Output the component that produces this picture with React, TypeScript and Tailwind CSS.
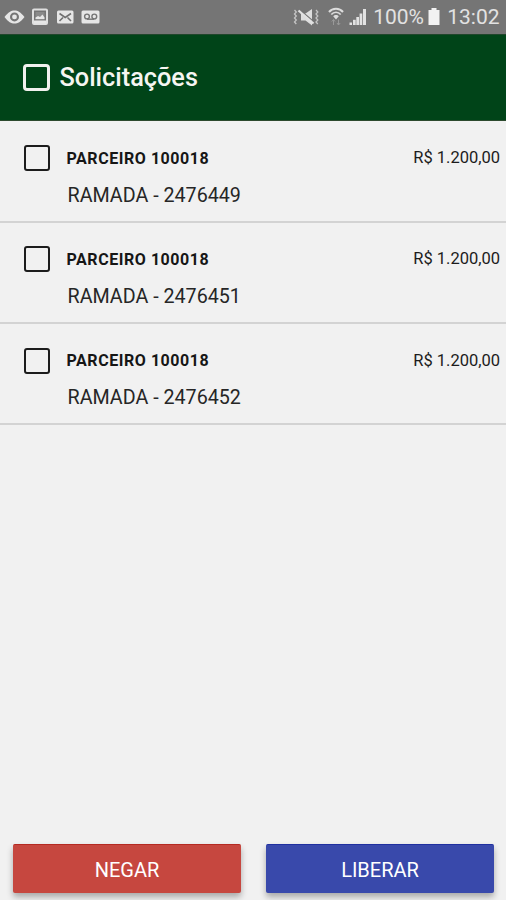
import clsx from "clsx";

const requests = [
  { id: "2476449", partner: "PARCEIRO 100018", name: "RAMADA", amount: "R$ 1.200,00" },
  { id: "2476451", partner: "PARCEIRO 100018", name: "RAMADA", amount: "R$ 1.200,00" },
  { id: "2476452", partner: "PARCEIRO 100018", name: "RAMADA", amount: "R$ 1.200,00" },
];

function NotificationIcons() {
  return (
    <svg width="102" height="34" viewBox="0 0 102 34" fill="#e6e6e6">
      {/* eye */}
      <path
        fillRule="evenodd"
        d="M4.500 17C8.500 12 11 10.500 14.500 10.500S20.500 12 24.500 17C20.500 22 18 23.500 14.500 23.500S8.500 22 4.500 17ZM14.500 12.400A4.500 4.500 0 1 0 14.500 21.400A4.500 4.500 0 1 0 14.500 12.400Z"
      />
      <circle cx="14.500" cy="16.900" r="2.400" />
      {/* picture */}
      <rect x="33" y="9.500" width="14" height="14.500" rx="1" fill="none" stroke="#e0e0e0" strokeWidth="2" />
      <rect x="35.500" y="12" width="9" height="8.500" fill="#8a8a8a" />
      <rect x="34" y="20.500" width="12" height="3" />
      <path d="M35.500 19V17.500L38 16L40 17L42.500 14.500L44.500 17.500V19Z" />
      {/* mail */}
      <rect x="57" y="10.500" width="16.500" height="13" rx="1.500" />
      <path
        d="M59.500 13.500L65.200 17.500L71 13.500M59.500 21L63 17.500M71 21L67.500 17.500"
        fill="none"
        stroke="#707070"
        strokeWidth="1.600"
      />
      {/* voicemail */}
      <rect x="81.500" y="10.500" width="18" height="13" rx="1.500" />
      <g fill="none" stroke="#757575" strokeWidth="1.400">
        <circle cx="87" cy="16.500" r="2.400" />
        <circle cx="94.300" cy="16.500" r="2.400" />
        <path d="M87 19.200H94.300" />
      </g>
    </svg>
  );
}

function MuteIcon() {
  return (
    <svg width="27" height="34" viewBox="0 0 27 34" fill="#dedede">
      <path d="M8 13.500H12.500L19 9V25.500L12.500 20.500H8Z" />
      <path d="M7 10L20.500 21.500" stroke="#757575" strokeWidth="1.500" />
      <path d="M5.500 10.500L20.500 23.500" stroke="#e2e2e2" strokeWidth="2.200" />
      <path
        d="M1.500 10L3.300 12L1.500 14L3.300 16L1.500 18L3.300 20L1.500 22L3.300 24M23 10L24.800 12L23 14L24.800 16L23 18L24.800 20L23 22L24.800 24"
        fill="none"
        stroke="#c4c4c4"
        strokeWidth="1.300"
      />
    </svg>
  );
}

function WifiIcon() {
  return (
    <svg width="16" height="34" viewBox="0 0 16 34" fill="none" stroke="#dcdcdc">
      <path d="M1 12C4.500 7.700 11.500 7.700 15 12" strokeWidth="2" />
      <path d="M3.300 14.500C5.800 11.500 10.200 11.500 12.700 14.500" strokeWidth="1.700" />
      <path d="M5.200 16.200C6.500 14.700 9.500 14.700 10.800 16.200L8 19.500Z" fill="#dcdcdc" stroke="none" />
      <path
        d="M5.500 19.500V25M3.800 21.500L5.500 19.500L7 21.500M10.500 19.500V25M9 23L10.500 25L12.200 23"
        stroke="#999999"
      />
    </svg>
  );
}

function SignalIcon() {
  return (
    <svg width="18" height="34" viewBox="0 0 18 34" fill="#e2e2e2">
      <rect x="0.500" y="22.500" width="2.500" height="2.500" />
      <rect x="4" y="19.800" width="2.700" height="5.200" />
      <rect x="7.300" y="17" width="2.700" height="8" />
      <rect x="10.600" y="13.500" width="2.700" height="11.500" />
      <rect x="14" y="9" width="3" height="16" />
    </svg>
  );
}

function StatusBar() {
  return (
    <div className="flex h-[34px] items-center bg-[#757575] text-[21px] leading-[34px] text-[#e2e2e2]">
      <NotificationIcons />
      <div className="ml-auto flex items-center pr-[6.5px]">
        <MuteIcon />
        <span className="ml-[8px]">
          <WifiIcon />
        </span>
        <span className="ml-[5px]">
          <SignalIcon />
        </span>
        <span className="ml-[6px] w-[52px] whitespace-nowrap">100%</span>
        <svg width="12" height="34" viewBox="0 0 12 34" className="ml-[3px]" fill="#f2f2f2">
          <path d="M3.500 8H8.500V10H11.500V25H0.500V10H3.500Z" />
        </svg>
        <span className="ml-[7px] whitespace-nowrap">13:02</span>
      </div>
    </div>
  );
}

function Checkbox({ light = false, label }: { light?: boolean; label: string }) {
  return (
    <button
      type="button"
      role="checkbox"
      aria-checked={false}
      aria-label={label}
      className={clsx(
        "shrink-0",
        light
          ? "size-[27px] rounded-[4px] border-[3px] border-[#f1f1ee]"
          : "size-[26px] rounded-[3px] border-2 border-[#1c1c1c]",
      )}
    />
  );
}

export default function App() {
  return (
    <div className="flex h-[900px] w-[506px] flex-col overflow-hidden bg-[#f1f1f1] font-['Roboto',sans-serif]">
      <StatusBar />
      <header className="flex h-[87px] items-center border-t border-b border-t-[#20462b] border-b-[#2c4a2e] bg-[#004418] pl-[23px]">
        <Checkbox light label="Todas" />
        <h1 className="ml-[9.5px] text-[25.3px] font-medium leading-[30px] text-[#f6f6f2]">Solicitações</h1>
      </header>

      <ul className="flex-1 pt-[0.5px]">
        {requests.map((r) => (
          <li key={r.id} className="h-[101.3px] border-b-2 border-[#d3d3d3] pt-[23.5px] pr-[6px] pl-[24px]">
            <div className="flex h-[26px] items-center">
              <Checkbox label={r.id} />
              <span className="ml-[16.5px] pt-px text-[16px] font-bold tracking-[0.55px] text-[#161616]">
                {r.partner}
              </span>
              <span className="ml-auto pt-px text-[16.5px] text-[#1c1c1c]">{r.amount}</span>
            </div>
            <p className="mt-[12.6px] ml-[43.5px] text-[19.7px] leading-[24px] text-[#262626]">
              {r.name} - {r.id}
            </p>
          </li>
        ))}
      </ul>

      <footer className="flex gap-[25px] pr-[12px] pb-[7px] pl-[13px] text-[20px] text-white">
        <button
          type="button"
          className="h-[49px] flex-1 rounded-[2px] border-t border-[#b52a22] bg-[#c6473f] pt-[2px] shadow-[0_4px_6px_rgba(0,0,0,0.3)]"
        >
          NEGAR
        </button>
        <button
          type="button"
          className="h-[49px] flex-1 rounded-[2px] border-t border-[#2030a0] bg-[#3949ab] pt-[2px] shadow-[0_4px_6px_rgba(0,0,0,0.3)]"
        >
          LIBERAR
        </button>
      </footer>
    </div>
  );
}
